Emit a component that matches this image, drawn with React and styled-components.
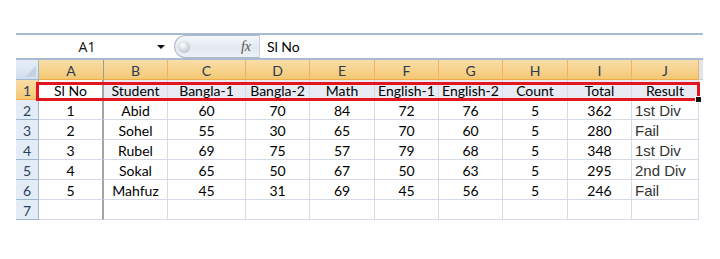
import React from 'react'
import styled, { createGlobalStyle, css } from 'styled-components'

const Global = createGlobalStyle`
  html, body { margin: 0; padding: 0; background: #fff; }
  body { font-family: Lato, "Liberation Sans", sans-serif; }
`

const COLS = [
  { key: 'A', w: 65 },
  { key: 'B', w: 64 },
  { key: 'C', w: 78 },
  { key: 'D', w: 64 },
  { key: 'E', w: 65 },
  { key: 'F', w: 64 },
  { key: 'G', w: 64 },
  { key: 'H', w: 65 },
  { key: 'I', w: 64 },
  { key: 'J', w: 67 },
]

const HEAD = ['Sl No', 'Student', 'Bangla-1', 'Bangla-2', 'Math', 'English-1', 'English-2', 'Count', 'Total', 'Result']

const DATA = [
  [1, 'Abid', 60, 70, 84, 72, 76, 5, 362, '1st Div'],
  [2, 'Sohel', 55, 30, 65, 70, 60, 5, 280, 'Fail'],
  [3, 'Rubel', 69, 75, 57, 79, 68, 5, 348, '1st Div'],
  [4, 'Sokal', 65, 50, 67, 50, 63, 5, 295, '2nd Div'],
  [5, 'Mahfuz', 45, 31, 69, 45, 56, 5, 246, 'Fail'],
  ['', '', '', '', '', '', '', '', '', ''],
]

const Page = styled.div`
  padding: 33px 0 0 16px;
  width: 687px;
`

const FormulaBar = styled.div`
  display: flex;
  align-items: stretch;
  height: 23px;
  border-top: 2px solid #a9bbd2;
  border-bottom: 2px solid #a9bbd2;
  background: #fff;
`

const NameBox = styled.div`
  position: relative;
  width: 152px;
  display: flex;
  align-items: center;
  justify-content: center;
  font-family: "Open Sans", sans-serif;
  font-size: 14px;
  color: #111;
  padding-right: 10px;
  box-sizing: border-box;
`

const Arrow = styled.span`
  position: absolute;
  right: 3px;
  top: 10px;
  width: 0;
  height: 0;
  border-left: 4px solid transparent;
  border-right: 4px solid transparent;
  border-top: 4px solid #111;
`

const Capsule = styled.div`
  margin-left: 6px;
  width: 86px;
  box-sizing: border-box;
  border: 1px solid #aebbcc;
  border-right: 1px solid #c9d2de;
  border-radius: 12px 0 0 12px;
  background: linear-gradient(#f6f8fb, #e2e8f0 55%, #eef2f7);
  display: flex;
  align-items: center;
  justify-content: space-between;
  padding: 0 8px 0 3px;
`

const Knob = styled.span`
  width: 12px;
  height: 12px;
  border-radius: 50%;
  background: radial-gradient(circle at 40% 35%, #ffffff, #c2cad5 70%, #9ea9b7);
`

const Fx = styled.span`
  font-family: "Liberation Serif", serif;
  font-style: italic;
  font-size: 14px;
  color: #555;
`

const Formula = styled.div`
  flex: 1;
  display: flex;
  align-items: center;
  padding-left: 7px;
  font-family: Lato, sans-serif;
  font-size: 14px;
  color: #000;
`

const Sheet = styled.div`
  position: relative;
  display: grid;
  grid-template-columns: 23px ${COLS.map(c => c.w + 'px').join(' ')} 4px;
  grid-auto-rows: 20px;
`

const Corner = styled.div`
  position: relative;
  background: linear-gradient(#e6edf7, #d3dfee);
  border-right: 1px solid #9eb6ce;
  border-bottom: 1px solid #9eb6ce;
  box-sizing: border-box;
  &::after {
    content: '';
    position: absolute;
    right: 2px;
    bottom: 2px;
    border-left: 11px solid transparent;
    border-bottom: 11px solid #c6d2e2;
  }
`

const ColHead = styled.div`
  box-sizing: border-box;
  display: flex;
  align-items: center;
  justify-content: center;
  font-size: 14px;
  color: #2b3a4e;
  background: linear-gradient(#f9dea9, #f6d18a 60%, #f3c874);
  border-right: 1px solid ${p => (p.$freeze ? '#a09c90' : '#f0b25e')};
  border-bottom: 1px solid #f2a94a;
  padding-top: 2px;
`

const Edge = styled.div`
  background: ${p => (p.$head ? '#dfe6ef' : '#fff')};
  border-bottom: ${p => (p.$head ? '1px solid #c5d0dd' : 'none')};
  box-sizing: border-box;
`

const RowHead = styled.div`
  box-sizing: border-box;
  display: flex;
  align-items: center;
  justify-content: center;
  font-size: 14px;
  color: #2b3f5e;
  padding-top: 2px;
  border-right: 1px solid #9eb6ce;
  border-bottom: 1px solid #9eb6ce;
  ${p =>
    p.$sel
      ? css`
          background: linear-gradient(#f9dea9, #f3c874);
          border-bottom-color: #f2a94a;
          border-right-color: #f2a94a;
        `
      : css`
          background: #e4ecf7;
        `}
`

const Cell = styled.div`
  box-sizing: border-box;
  display: flex;
  align-items: center;
  justify-content: ${p => (p.$text ? 'flex-start' : 'center')};
  padding: 2px 0 0 ${p => (p.$text ? '3px' : '0')};
  white-space: nowrap;
  overflow: hidden;
  font-family: ${p => (p.$text ? '"Liberation Sans", Arial, sans-serif' : 'Lato, sans-serif')};
  font-size: ${p => (p.$text ? '15px' : '14px')};
  color: ${p => (p.$text ? '#333' : '#000')};
  background: ${p => (p.$sel ? '#e8ebf4' : '#fff')};
  border-bottom: 1px solid #d4dbe7;
  border-right: ${p => (p.$freeze ? '2px solid #a3a3a3' : '1px solid #d4dbe7')};
`

const Highlight = styled.div`
  position: absolute;
  left: 20px;
  top: 22px;
  width: 664px;
  height: 19px;
  border: 3px solid #e3161f;
  box-sizing: border-box;
  pointer-events: none;
  &::after {
    content: '';
    position: absolute;
    right: -5px;
    bottom: -5px;
    width: 5px;
    height: 5px;
    background: #111;
    border: 1px solid #fff;
  }
`

export default function App() {
  return (
    <>
      <Global />
      <Page>
        <FormulaBar>
          <NameBox>
            A1
            <Arrow />
          </NameBox>
          <Capsule>
            <Knob />
            <Fx>fx</Fx>
          </Capsule>
          <Formula>Sl No</Formula>
        </FormulaBar>
        <Sheet>
          <Corner />
          {COLS.map((c, i) => (
            <ColHead key={c.key} $freeze={i === 0}>{c.key}</ColHead>
          ))}
          <Edge $head />

          <RowHead $sel>1</RowHead>
          {HEAD.map((h, i) => (
            <Cell key={h} $sel={i > 0} $freeze={i === 0}>{h}</Cell>
          ))}
          <Edge />

          {DATA.map((row, r) => (
            <React.Fragment key={r}>
              <RowHead>{r + 2}</RowHead>
              {row.map((v, i) => (
                <Cell key={i} $text={i === 9} $freeze={i === 0}>{v}</Cell>
              ))}
              <Edge />
            </React.Fragment>
          ))}
          <Highlight />
        </Sheet>
      </Page>
    </>
  )
}
